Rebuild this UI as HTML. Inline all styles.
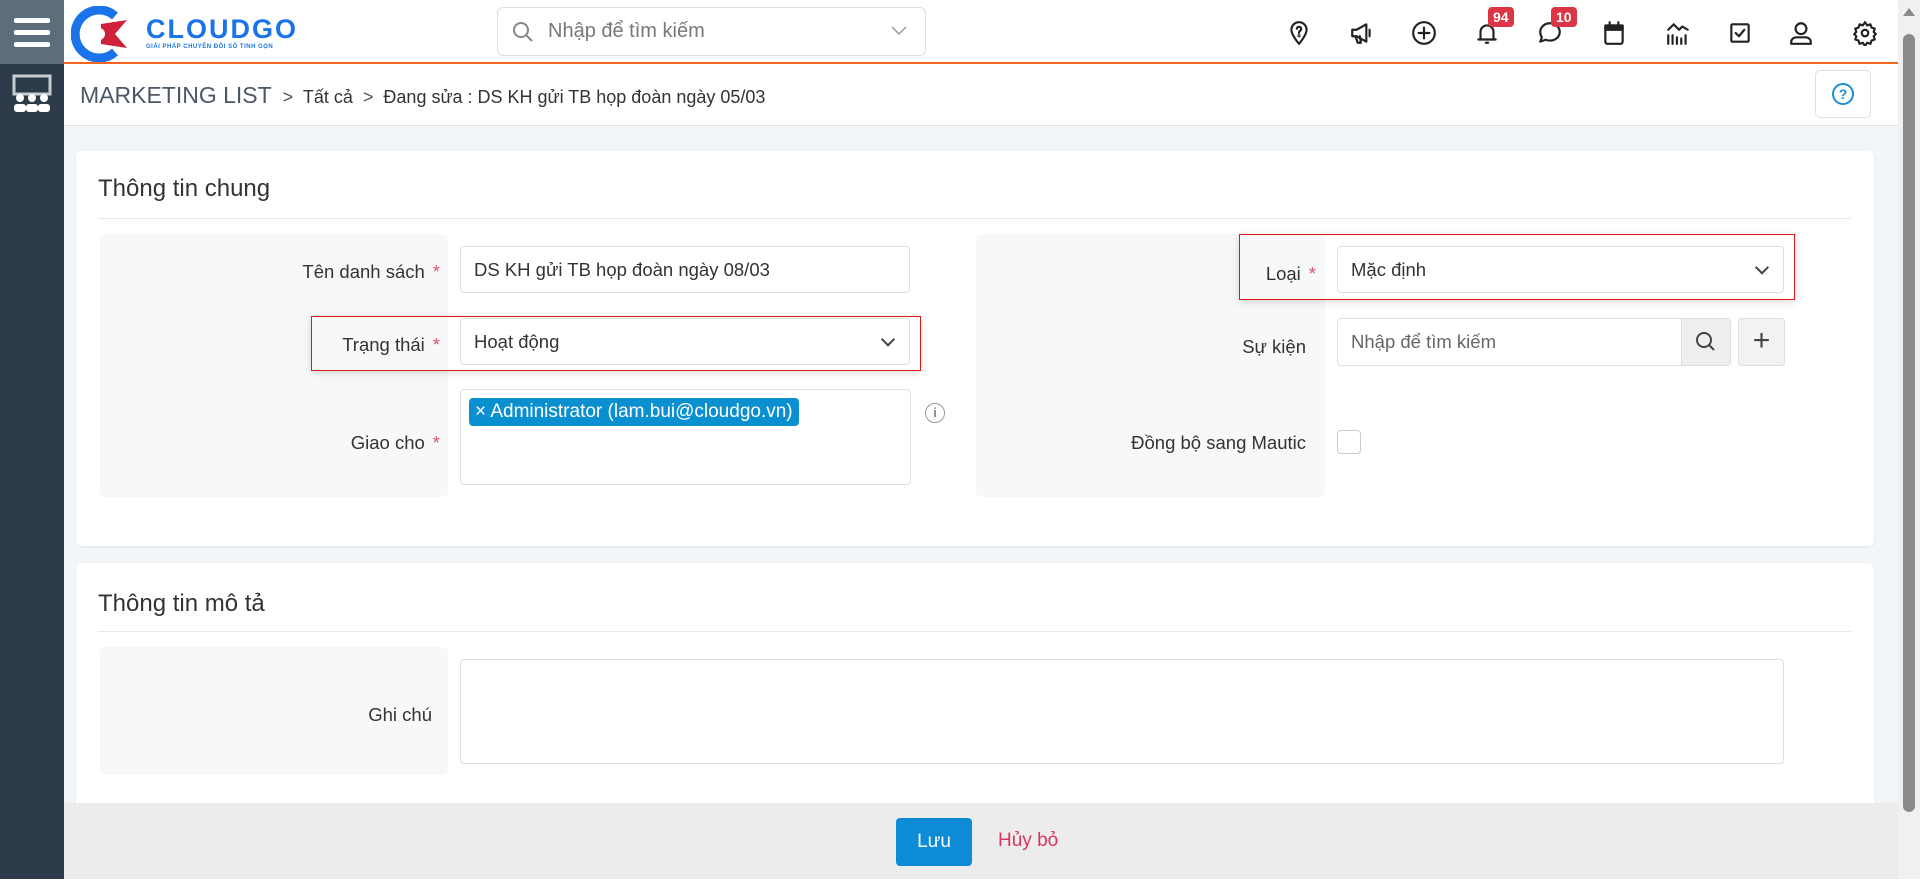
<!DOCTYPE html>
<html><head><meta charset="utf-8"><style>
*{box-sizing:border-box;margin:0;padding:0}
body{width:1920px;height:881px;overflow:hidden;background:#f3f6f9;font-family:"Liberation Sans","DejaVu Sans",sans-serif;color:#333;position:relative}
.abs{position:absolute}
.side{left:0;top:0;width:64px;height:879px;background:#2c3a4a}
.hamb{left:0;top:0;width:64px;height:64px;background:#5d6d7b}
.hamb i{position:absolute;left:14px;width:36px;height:5px;background:#fff;border-radius:2px}
.header{left:64px;top:0;width:1834px;height:64px;background:#fff;border-bottom:2px solid #f26522}
.bc{left:64px;top:64px;width:1834px;height:62px;background:#fff;border-bottom:1px solid #e2e5e8}
.card{background:#fff;border-radius:6px;box-shadow:0 1px 3px rgba(0,0,0,.08)}
.title{font-size:24px;color:#333}
.panel{background:#f7f8fa;border-radius:6px}
.lbl{font-size:18.5px;color:#333;text-align:right}
.star{color:#e0526a;margin-left:8px}
.inp{background:#fff;border:1px solid #dcdfe3;border-radius:4px;font-size:18.5px;color:#333;padding-left:13px;display:flex;align-items:center}
.red{border:1.5px solid #e01818;box-shadow:0 2px 8px rgba(0,0,0,.15)}
.chev{position:absolute;right:16px;top:50%;width:10px;height:10px;border-right:2px solid #444;border-bottom:2px solid #444;transform:translateY(-75%) rotate(45deg)}
.badge{background:#dc3545;color:#fff;font-size:14px;font-weight:bold;border-radius:4px;padding:2px 5px}
svg.ic{position:absolute;top:20px;width:26px;height:26px;fill:none;stroke:#222;stroke-width:2;stroke-linecap:round;stroke-linejoin:round}
</style></head><body>
<div class="abs side"></div>
<div class="abs hamb"><i style="top:18px"></i><i style="top:30px"></i><i style="top:42px"></i></div>
<svg class="abs" style="left:10px;top:74px" width="44" height="40" viewBox="0 0 44 40"><rect x="4" y="2" width="36" height="18" fill="none" stroke="#c8cdd3" stroke-width="3"/><circle cx="10" cy="24" r="4" fill="#fff"/><circle cx="22" cy="24" r="4" fill="#fff"/><circle cx="34" cy="24" r="4" fill="#fff"/><rect x="4" y="30" width="12" height="8" rx="3" fill="#fff"/><rect x="16" y="30" width="12" height="8" rx="3" fill="#fff"/><rect x="28" y="30" width="12" height="8" rx="3" fill="#fff"/></svg>
<div class="abs header"></div>
<svg class="abs" style="left:71px;top:6px" width="60" height="56" viewBox="0 0 60 56"><path d="M44 10 A24 24 0 1 0 44 46" fill="none" stroke="#1a73e8" stroke-width="9"/><path d="M30 18 L56 14 L44 28 L56 42 L30 38 Z" fill="#d0223a"/><circle cx="28" cy="28" r="6" fill="#fff"/></svg>
<div class="abs" style="left:146px;top:14px;font-size:27px;font-weight:bold;color:#1a73e8;letter-spacing:2px">CLOUDGO</div>
<div class="abs" style="left:146px;top:44px;font-size:6px;font-weight:bold;color:#1a73e8;letter-spacing:.5px">GIẢI PHÁP CHUYỂN ĐỔI SỐ TINH GỌN</div>
<div class="abs inp" style="left:497px;top:7px;width:429px;height:49px;border-radius:6px;padding-left:50px;color:#777;font-size:20px">Nhập để tìm kiếm</div>
<svg class="abs" style="left:511px;top:20px" width="24" height="24" viewBox="0 0 24 24" fill="none" stroke="#888" stroke-width="2"><circle cx="10" cy="10" r="7"/><path d="M15 15l6 6"/></svg>
<svg class="abs" style="left:891px;top:26px" width="16" height="10" viewBox="0 0 16 10" fill="none" stroke="#999" stroke-width="1.5"><path d="M1 1l7 7 7-7"/></svg>
<svg class="ic" style="left:1286px" viewBox="0 0 24 24"><path d="M12 22s-7-8-7-13a7 7 0 0 1 14 0c0 5-7 13-7 13z"/><path d="M10 8a2 2 0 1 1 3 2c-1 .5-1 1-1 2"/><circle cx="12" cy="14.5" r=".5"/></svg>
<svg class="ic" style="left:1349px" viewBox="0 0 24 24"><path d="M3 9v6h4l9 5V4L7 9H3z"/><path d="M6 15l2 6h3l-1-6M19 9v6"/></svg>
<svg class="ic" style="left:1411px" viewBox="0 0 24 24"><circle cx="12" cy="12" r="10"/><path d="M12 7v10M7 12h10"/></svg>
<svg class="ic" style="left:1474px" viewBox="0 0 24 24"><path d="M6 18V11a6 6 0 0 1 12 0v7M4 18h16M11 21h2"/></svg>
<svg class="ic" style="left:1537px" viewBox="0 0 24 24"><path d="M12 3c5 0 9 3.5 9 8s-4 8-9 8c-1.5 0-3-.3-4-.8L3 20l1.5-4C3.5 14.5 3 13 3 11c0-4.5 4-8 9-8z"/></svg>
<div class="abs badge" style="left:1488px;top:7px">94</div>
<div class="abs badge" style="left:1551px;top:7px">10</div>
<svg class="ic" style="left:1601px" viewBox="0 0 24 24"><rect x="4" y="5" width="16" height="17" rx="2"/><path d="M8 2v4M16 2v4" /><rect x="4" y="5" width="16" height="4" fill="#222"/></svg>
<svg class="ic" style="left:1665px" viewBox="0 0 24 24"><path d="M3 22v-8M7 22v-8M11 22v-6M15 22v-5M19 22v-8M3 9l5-5 5 5 3-3 5 3"/></svg>
<svg class="ic" style="left:1727px" viewBox="0 0 24 24"><rect x="4" y="4" width="16" height="16" rx="1"/><path d="M8 12l3 3 5-6"/></svg>
<svg class="ic" style="left:1788px" viewBox="0 0 24 24"><circle cx="12" cy="8" r="5"/><path d="M3 22v-2c0-2 2-4 5-4h8c3 0 5 2 5 4v2z"/></svg>
<svg class="ic" style="left:1852px" viewBox="0 0 24 24"><circle cx="12" cy="12" r="3"/><path d="M12 2l2 3 3-1 1 3 3 1-1 3 2 2-2 2 1 3-3 1-1 3-3-1-2 3-2-3-3 1-1-3-3-1 1-3-2-2 2-2-1-3 3-1 1-3 3 1z"/></svg>
<div class="abs bc"></div>
<div class="abs" style="left:80px;top:82px;font-size:23px;color:#4a5866">MARKETING LIST <span style="color:#555;font-size:18px">&nbsp;&gt;&nbsp; </span><span style="font-size:18px;color:#333">Tất cả <span style="color:#555">&nbsp;&gt;&nbsp;</span> Đang sửa : DS KH gửi TB họp đoàn ngày 05/03</span></div>
<div class="abs" style="left:1815px;top:70px;width:56px;height:48px;border:1px solid #dcdfe3;border-radius:5px;background:#fff"></div>
<div class="abs" style="left:1832px;top:83px;width:22px;height:22px;border:2.5px solid #1a8fd6;border-radius:50%;color:#1a8fd6;font-size:14px;font-weight:bold;text-align:center;line-height:18px">?</div>
<div class="abs" style="left:1898px;top:0;width:22px;height:881px;background:#f0f0f0"></div>
<div class="abs" style="left:1903px;top:34px;width:12px;height:778px;background:#8a8a8a;border-radius:6px"></div>
<div class="abs" style="left:1903px;top:8px;width:0;height:0;border-left:6px solid transparent;border-right:6px solid transparent;border-bottom:8px solid #8a8a8a"></div>

<div class="abs card" style="left:76px;top:151px;width:1798px;height:395px"></div>
<div class="abs title" style="left:98px;top:175px">Thông tin chung</div>
<div class="abs" style="left:98px;top:218px;width:1753px;height:1px;background:#e6e8eb"></div>
<div class="abs panel" style="left:100px;top:234px;width:348px;height:263px"></div>
<div class="abs panel" style="left:976px;top:234px;width:349px;height:263px"></div>
<div class="abs lbl" style="left:100px;top:261px;width:340px">Tên danh sách<span class="star">*</span></div>
<div class="abs inp" style="left:460px;top:246px;width:450px;height:47px">DS KH gửi TB họp đoàn ngày 08/03</div>
<div class="abs red" style="left:311px;top:316px;width:610px;height:55px"></div>
<div class="abs lbl" style="left:100px;top:334px;width:340px">Trạng thái<span class="star">*</span></div>
<div class="abs inp" style="left:460px;top:318px;width:450px;height:47px">Hoạt động<i class="chev"></i></div>
<div class="abs lbl" style="left:100px;top:432px;width:340px">Giao cho<span class="star">*</span></div>
<div class="abs inp" style="left:460px;top:389px;width:451px;height:96px;align-items:flex-start;padding:8px"><span style="background:#0a90d0;color:#fff;border-radius:4px;padding:3px 6px;font-size:19px">× Administrator (lam.bui@cloudgo.vn)</span></div>
<div class="abs" style="left:925px;top:403px;width:20px;height:20px;border:1.5px solid #999;border-radius:50%;color:#888;font-size:13px;text-align:center;line-height:17px;font-weight:bold">i</div>
<div class="abs red" style="left:1239px;top:234px;width:556px;height:66px"></div>
<div class="abs lbl" style="left:976px;top:263px;width:340px">Loại<span class="star">*</span></div>
<div class="abs inp" style="left:1337px;top:246px;width:447px;height:47px">Mặc định<i class="chev"></i></div>
<div class="abs lbl" style="left:976px;top:336px;width:330px">Sự kiện</div>
<div class="abs inp" style="left:1337px;top:318px;width:394px;height:48px;color:#666">Nhập để tìm kiếm</div>
<div class="abs" style="left:1681px;top:319px;width:49px;height:46px;background:#eee;border-left:1px solid #dcdfe3"></div>
<svg class="abs" style="left:1694px;top:330px" width="24" height="24" viewBox="0 0 24 24" fill="none" stroke="#444" stroke-width="2"><circle cx="10" cy="10" r="7"/><path d="M15 15l5 5"/></svg>
<div class="abs" style="left:1738px;top:318px;width:47px;height:48px;background:#f2f2f2;border:1px solid #dcdfe3;border-radius:4px;font-size:30px;color:#444;text-align:center;line-height:44px">+</div>
<div class="abs lbl" style="left:976px;top:432px;width:330px">Đồng bộ sang Mautic</div>
<div class="abs" style="left:1337px;top:430px;width:24px;height:24px;border:1px solid #ccc;border-radius:4px;background:#fff"></div>

<div class="abs card" style="left:76px;top:563px;width:1798px;height:260px"></div>
<div class="abs title" style="left:98px;top:590px">Thông tin mô tả</div>
<div class="abs" style="left:98px;top:631px;width:1753px;height:1px;background:#e6e8eb"></div>
<div class="abs panel" style="left:100px;top:647px;width:348px;height:128px"></div>
<div class="abs lbl" style="left:100px;top:704px;width:332px">Ghi chú</div>
<div class="abs inp" style="left:460px;top:659px;width:1324px;height:105px"></div>

<div class="abs" style="left:64px;top:803px;width:1834px;height:76px;background:#ececec"></div>
<div class="abs" style="left:896px;top:818px;width:76px;height:48px;background:#0d8bd6;border-radius:4px;color:#fff;font-size:19px;text-align:center;line-height:48px">Lưu</div>
<div class="abs" style="left:998px;top:830px;font-size:19px;color:#d9365a">Hủy bỏ</div>
<div class="abs" style="left:0;top:879px;width:1920px;height:2px;background:#fff"></div>
</body></html>
